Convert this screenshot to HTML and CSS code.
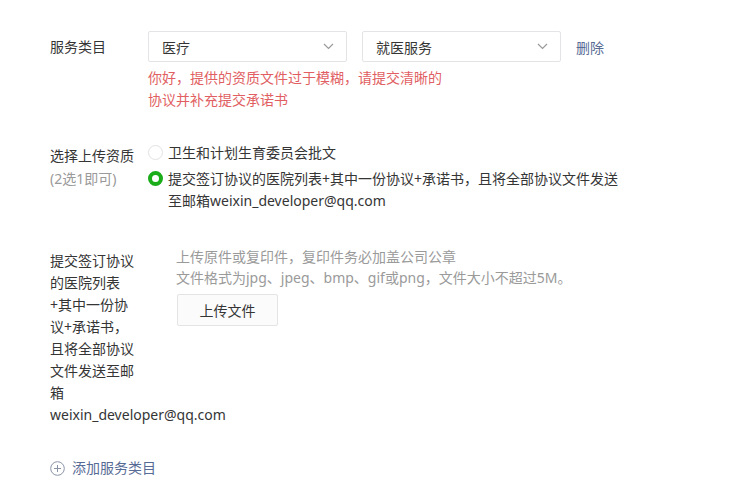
FILE: index.html
```html
<!DOCTYPE html>
<html lang="zh-CN">
<head>
<meta charset="utf-8">
<link rel="stylesheet" href="styles.css">
</head>
<body>
<div class="page">
  <div class="row row-category">
    <div class="label label-inline">服务类目</div>
    <div class="field">
      <div class="selects">
        <div class="select">
          <span>医疗</span>
          <svg class="chev" width="11" height="7" viewBox="0 0 11 7"><path d="M1 1 L5.5 5.5 L10 1" fill="none" stroke="#9a9a9a" stroke-width="1.2"/></svg>
        </div>
        <div class="select">
          <span>就医服务</span>
          <svg class="chev" width="11" height="7" viewBox="0 0 11 7"><path d="M1 1 L5.5 5.5 L10 1" fill="none" stroke="#9a9a9a" stroke-width="1.2"/></svg>
        </div>
        <a class="link del">删除</a>
      </div>
      <p class="error">你好，提供的资质文件过于模糊，请提交清晰的<br>协议并补充提交承诺书</p>
    </div>
  </div>

  <div class="row row-qual">
    <div class="label label-qual">选择上传资质<br><span class="sub">(2选1即可)</span></div>
    <div class="field options">
      <div class="option">
        <span class="radio"></span>
        <span class="opt-text">卫生和计划生育委员会批文</span>
      </div>
      <div class="option">
        <span class="radio checked"></span>
        <span class="opt-text">提交签订协议的医院列表+其中一份协议+承诺书，且将全部协议文件发送至邮箱weixin_developer@qq.com</span>
      </div>
    </div>
  </div>

  <div class="row row-upload">
    <div class="label label-narrow">提交签订协议的医院列表+其中一份协议+承诺书，且将全部协议文件发送至邮箱weixin_developer@qq.com</div>
    <div class="field upload">
      <p class="hint">上传原件或复印件，复印件务必加盖公司公章<br>文件格式为jpg、jpeg、bmp、gif或png，文件大小不超过5M。</p>
      <button class="btn">上传文件</button>
    </div>
  </div>

  <div class="add">
    <svg width="15" height="15" viewBox="0 0 15 15"><circle cx="7.5" cy="7.5" r="6.8" fill="none" stroke="#8a94a8" stroke-width="1"/><path d="M7.5 4 V11 M4 7.5 H11" stroke="#8a94a8" stroke-width="1"/></svg>
    <span>添加服务类目</span>
  </div>
</div>
</body>
</html>
```

FILE: styles.css
```css
* { box-sizing: border-box; }
html, body { margin: 0; padding: 0; background: #fff; }
body {
  font-family: "Noto Sans", "Noto Sans CJK SC", sans-serif;
  font-size: 14px;
  color: #353535;
}
.page {
  padding: 31px 0 0 50px;
}
.row {
  display: flex;
  align-items: flex-start;
}
.label-inline {
  width: 98px;
  line-height: 31px;
  flex-shrink: 0;
}
.selects {
  display: flex;
  align-items: center;
}
.select {
  width: 199px;
  height: 31px;
  border: 1px solid #e4e4e8;
  border-radius: 2px;
  background: #fff;
  display: flex;
  align-items: center;
  justify-content: space-between;
  padding: 0 12px 0 13px;
  margin-right: 15px;
}
.chev { display: block; }
.link {
  color: #576b95;
  cursor: pointer;
}
.del { margin-left: 0; }
.error {
  margin: 5px 0 0;
  color: #e15f63;
  line-height: 22px;
}
.row-qual {
  margin-top: 31px;
}
.label-qual {
  width: 98px;
  flex-shrink: 0;
  line-height: 23px;
  padding-top: 2px;
}
.sub { color: #9a9a9a; }
.options {
  display: flex;
  flex-direction: column;
  gap: 4px;
  width: 480px;
}
.option {
  display: flex;
  align-items: flex-start;
  line-height: 22px;
}
.radio {
  flex-shrink: 0;
  width: 15px;
  height: 15px;
  border-radius: 50%;
  border: 1px solid #e2e2e2;
  margin-top: 3px;
  margin-right: 5px;
  background: #fff;
}
.radio.checked {
  border: 4px solid #1aad19;
}
.row-upload {
  margin-top: 34px;
}
.label-narrow {
  width: 88px;
  flex-shrink: 0;
  line-height: 22px;
  padding-top: 4px;
  margin-right: 38px;
}
.hint {
  margin: 0;
  color: #9a9a9a;
  line-height: 21px;
}
.btn {
  margin-top: 6px;
  margin-left: 1px;
  width: 101px;
  height: 32px;
  border: 1px solid #e4e4e4;
  border-radius: 2px;
  background: #fbfbfb;
  font-family: inherit;
  font-size: 14px;
  color: #353535;
  padding: 0;
}
.add {
  margin-top: 31px;
  display: flex;
  align-items: center;
  gap: 7px;
  line-height: 22px;
  color: #576b95;
}
.add svg { display: block; }
```
